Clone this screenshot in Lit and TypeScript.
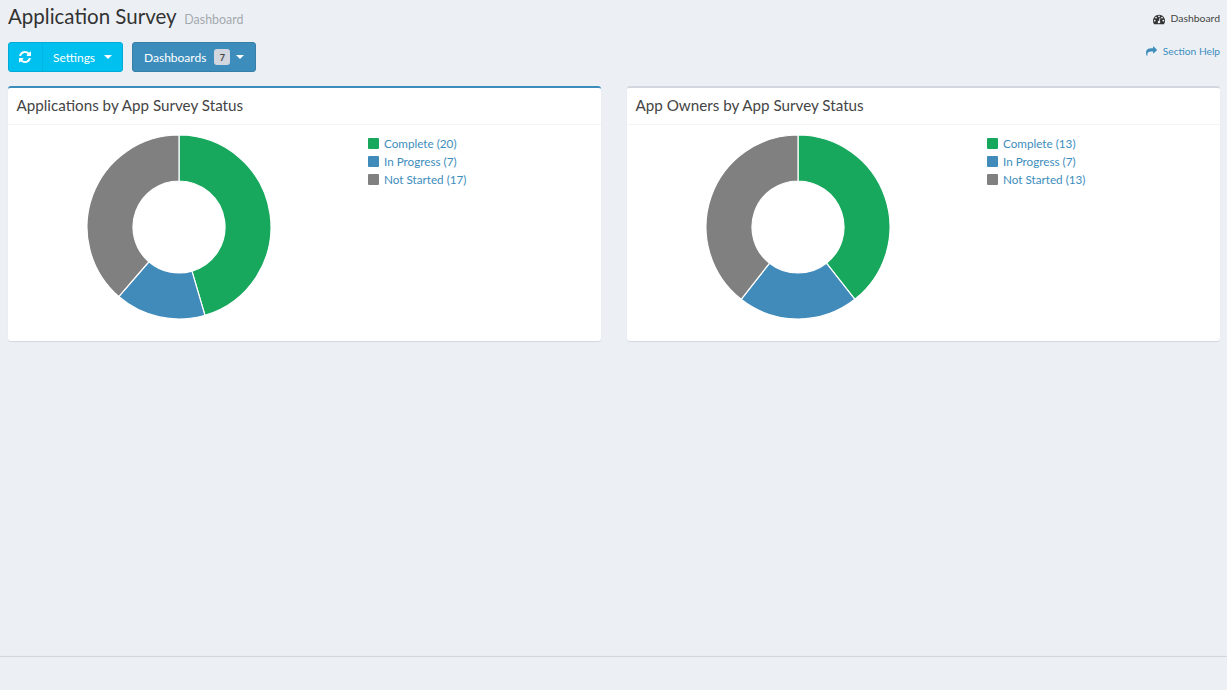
import { LitElement, html, css, svg } from "lit";
import { customElement } from "lit/decorators.js";

const COLORS = ["#17a75d", "#418bbb", "#808080"];
const LABELS = ["Complete", "In Progress", "Not Started"];

const REFRESH = "M1639 1056q0 5-1 7-64 268-268 434.5t-478 166.5q-146 0-282.5-55t-243.5-157l-129 129q-19 19-45 19t-45-19-19-45v-448q0-26 19-45t45-19h448q26 0 45 19t19 45-19 45l-137 137q71 66 161 102t187 36q134 0 250-65t186-179q11-17 53-117 8-23 30-23h192q13 0 22.5 9.5t9.5 22.5zm25-800v448q0 26-19 45t-45 19h-448q-26 0-45-19t-19-45 19-45l138-138q-148-137-349-137-134 0-250 65t-186 179q-11 17-53 117-8 23-30 23h-199q-13 0-22.5-9.5t-9.5-22.5v-7q65-268 270-434.5t480-166.5q146 0 284 55.5t245 156.5l130-129q19-19 45-19t45 19 19 45z";
const SHARE = "M1792 640q0 26-19 45l-512 512q-19 19-45 19t-45-19-19-45v-256h-224q-98 0-175.5 6t-154 21.5-133 42.5-105.5 69.5-80 101-48.5 138.5-17.5 181q0 55 5 123 0 6 2.5 23.5t2.5 26.5q0 15-8.5 25t-23.5 10q-16 0-28-17-7-9-13-22t-13.5-30-10.5-24q-127-285-127-451 0-199 53-333 162-403 875-403h224v-256q0-26 19-45t45-19 45 19l512 512q19 19 19 45z";
const GAUGE = "M384 1152q0-53-37.5-90.5t-90.5-37.5-90.5 37.5-37.5 90.5 37.5 90.5 90.5 37.5 90.5-37.5 37.5-90.5zm192-448q0-53-37.5-90.5t-90.5-37.5-90.5 37.5-37.5 90.5 37.5 90.5 90.5 37.5 90.5-37.5 37.5-90.5zm428 481l101-382q6-26-7.5-48.5t-38.5-29.5-48 6.5-30 39.5l-101 382q-60 5-107 43.5t-63 98.5q-20 77 20 146t117 89 146-20 89-117q16-60-6-117t-72-91zm660-33q0-53-37.5-90.5t-90.5-37.5-90.5 37.5-37.5 90.5 37.5 90.5 90.5 37.5 90.5-37.5 37.5-90.5zm-640-640q0-53-37.5-90.5t-90.5-37.5-90.5 37.5-37.5 90.5 37.5 90.5 90.5 37.5 90.5-37.5 37.5-90.5zm448 192q0-53-37.5-90.5t-90.5-37.5-90.5 37.5-37.5 90.5 37.5 90.5 90.5 37.5 90.5-37.5 37.5-90.5zm320 448q0 261-141 483-19 29-54 29h-1402q-35 0-54-29-141-221-141-483 0-182 71-348t191-286 286-191 348-71 348 71 286 191 191 286 71 348z";

function icon(d: string, cls: string) {
  return html`<svg class=${cls} viewBox="0 0 1792 1792" aria-hidden="true"><path fill="currentColor" d=${d}></path></svg>`;
}

function donut(values: number[]) {
  const total = values.reduce((a, b) => a + b, 0);
  const c = 93, R = 92, r = 46;
  let acc = 0;
  return html`<svg class="donut" viewBox="0 0 186 186">
    ${values.map((v, i) => {
      const a0 = (acc / total) * 2 * Math.PI;
      acc += v;
      const a1 = (acc / total) * 2 * Math.PI;
      const pt = (rad: number, a: number) =>
        `${(c + rad * Math.sin(a)).toFixed(2)} ${(c - rad * Math.cos(a)).toFixed(2)}`;
      const large = a1 - a0 > Math.PI ? 1 : 0;
      const d = `M${pt(R, a0)}A${R} ${R} 0 ${large} 1 ${pt(R, a1)}L${pt(r, a1)}A${r} ${r} 0 ${large} 0 ${pt(r, a0)}Z`;
      return svg`<path d=${d} fill=${COLORS[i]} stroke="#fff" stroke-width="1.2"></path>`;
    })}
  </svg>`;
}

@customElement("app-root")
export class AppRoot extends LitElement {
  static styles = css`
    :host {
      display: flex;
      flex-direction: column;
      height: 690px;
      background: #ecf0f5;
      font-family: "Lato", "Noto Sans", sans-serif;
      color: #333;
      overflow: hidden;
    }
    .main { flex: 1; padding: 0 7px 0 8px; }
    .head { display: flex; justify-content: space-between; align-items: flex-start; height: 30px; }
    .title { font-size: 20.5px; line-height: 33px; color: #333; white-space: nowrap; }
    .title small { font-size: 12.4px; color: #a4a9ad; margin-left: 3px; }
    .crumb { display: flex; align-items: center; gap: 5px; font-size: 10.4px; line-height: 13px; color: #444; margin-top: 12px; }
    .i-gauge { width: 12px; height: 12px; color: #333; }
    .bar { display: flex; justify-content: space-between; height: 30px; margin-top: 12px; }
    .btns { display: flex; gap: 9px; }
    .btn {
      display: flex;
      align-items: center;
      height: 30px;
      box-sizing: border-box;
      border-radius: 3px;
      color: #fff;
      font-size: 12px;
    }
    .settings { width: 115px; background: #00c0ef; border: 1px solid #00acd6; }
    .settings .ic { width: 34px; height: 100%; display: flex; align-items: center; justify-content: center; border-right: 1px solid #00b5e1; box-sizing: border-box; padding-right: 1px; }
    .settings .lb { margin-left: 10px; }
    .i-refresh { width: 14px; height: 14px; }
    .caret { width: 0; height: 0; border-left: 4px solid transparent; border-right: 4px solid transparent; border-top: 4px solid #fff; }
    .settings .caret { margin-left: 9px; }
    .dash { width: 124px; background: #3c8dbc; border: 1px solid #367fa9; padding-left: 11px; }
    .badge { margin-left: 8px; width: 16px; height: 16px; border-radius: 3px; background: #d2d6de; color: #444; font-size: 9px; font-weight: 700; display: flex; align-items: center; justify-content: center; }
    .dash .caret { margin-left: 6px; }
    .help { display: flex; align-items: center; gap: 6px; height: 18px; font-size: 10.2px; color: #3c8dbc; }
    .i-share { width: 11px; height: 11px; color: #3c8dbc; }
    .cards { display: grid; grid-template-columns: 593px 593px; column-gap: 26px; margin-top: 14px; }
    .card {
      height: 255px;
      box-sizing: border-box;
      background: #fff;
      border-top: 2px solid #d2d6de;
      border-radius: 3px;
      box-shadow: 0 1px 1px rgba(0, 0, 0, 0.1);
      display: flex;
      flex-direction: column;
    }
    .card.primary { border-top-color: #3c8dbc; }
    .card-head { height: 37px; box-sizing: border-box; padding: 8px 8px 0 8.5px; font-size: 15.2px; color: #444; border-bottom: 1px solid #f4f4f4; white-space: nowrap; }
    .card-body { flex: 1; display: flex; padding: 3px 0 0 78px; }
    .donut { width: 186px; height: 186px; margin-top: 6px; flex: none; }
    .legend { list-style: none; margin: 0 0 0 96px; padding: 6px 0 0; font-size: 11.7px; color: #3c8dbc; }
    .legend li { display: flex; align-items: center; gap: 5px; height: 18px; white-space: nowrap; }
    .swatch { width: 11px; height: 11px; border-radius: 1px; flex: none; }
    .foot { height: 33px; border-top: 1px solid #d2d6de; box-shadow: 0 -1px 2px rgba(0,0,0,0.02); }
  `;

  private card(title: string, values: number[], primary: boolean) {
    return html`<section class="card ${primary ? "primary" : ""}">
      <div class="card-head">${title}</div>
      <div class="card-body">
        ${donut(values)}
        <ul class="legend">
          ${values.map(
            (v, i) => html`<li><span class="swatch" style="background:${COLORS[i]}"></span>${LABELS[i]} (${v})</li>`
          )}
        </ul>
      </div>
    </section>`;
  }

  render() {
    return html`
      <div class="main">
        <header class="head">
          <div class="title">Application Survey <small>Dashboard</small></div>
          <div class="crumb">${icon(GAUGE, "i-gauge")}Dashboard</div>
        </header>
        <div class="bar">
          <div class="btns">
            <div class="btn settings">
              <span class="ic">${icon(REFRESH, "i-refresh")}</span>
              <span class="lb">Settings</span><span class="caret"></span>
            </div>
            <div class="btn dash">
              Dashboards<span class="badge">7</span><span class="caret"></span>
            </div>
          </div>
          <div class="help">${icon(SHARE, "i-share")}Section Help</div>
        </div>
        <div class="cards">
          ${this.card("Applications by App Survey Status", [20, 7, 17], true)}
          ${this.card("App Owners by App Survey Status", [13, 7, 13], false)}
        </div>
      </div>
      <footer class="foot"></footer>
    `;
  }
}
